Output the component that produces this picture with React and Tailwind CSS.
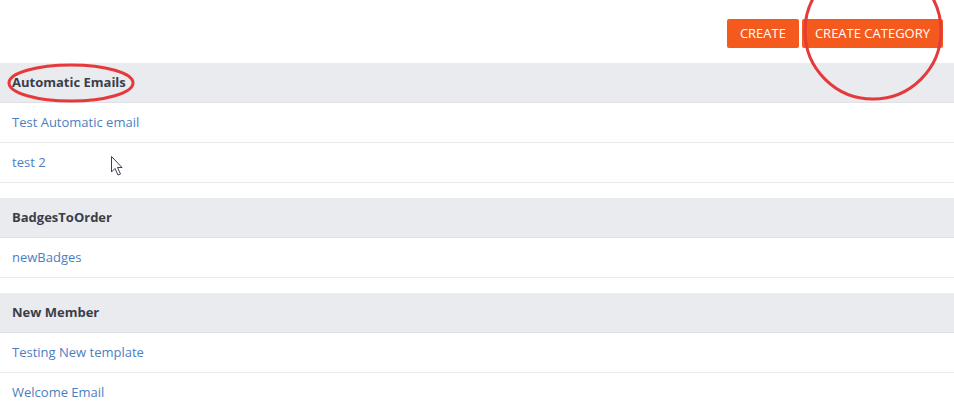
import React from "react";

const sections = [
  { title: "Automatic Emails", items: ["Test Automatic email", "test 2"] },
  { title: "BadgesToOrder", items: ["newBadges"] },
  { title: "New Member", items: ["Testing New template", "Welcome Email"] },
];

export default function App() {
  return (
    <div
      className="relative w-[954px] h-[403px] overflow-hidden bg-white"
      style={{ fontFamily: '"Open Sans", "Liberation Sans", sans-serif' }}
    >
      <div className="h-[63px] flex items-start justify-end pr-[11px] pt-[19px] gap-[3px]">
        <button className="h-[29px] px-[13px] rounded-[2px] bg-[#f45a1d] text-white text-[13px] leading-none">
          CREATE
        </button>
        <button className="h-[29px] px-[13px] rounded-[2px] bg-[#f45a1d] text-white text-[13px] leading-none">
          CREATE CATEGORY
        </button>
      </div>
      {sections.map((s) => (
        <div key={s.title} className="mb-[15px]">
          <div className="h-10 flex items-center px-3 bg-[#e9ebef] border-b border-[#dfe1e5] text-[13px] font-bold text-[#3a3e4b]">
            {s.title}
          </div>
          {s.items.map((it) => (
            <div
              key={it}
              className="h-10 flex items-center px-3 border-b border-[#e8e9ec] text-[13px] text-[#4a80c2]"
            >
              {it}
            </div>
          ))}
        </div>
      ))}
      <svg
        className="absolute left-0 top-0 pointer-events-none"
        width="954"
        height="403"
      >
        <ellipse cx="71" cy="83" rx="62" ry="18" fill="none" stroke="#e5393b" strokeWidth="3" />
        <ellipse cx="873" cy="31" rx="68" ry="68" fill="none" stroke="#e5393b" strokeWidth="3" />
        <path
          d="M111.5 156.5 L111.5 172 L115 168.5 L118 175 L120.5 174 L117.5 167.5 L122 167.5 Z"
          fill="#fff"
          stroke="#3a3f55"
          strokeWidth="1"
          strokeLinejoin="miter"
        />
      </svg>
    </div>
  );
}
